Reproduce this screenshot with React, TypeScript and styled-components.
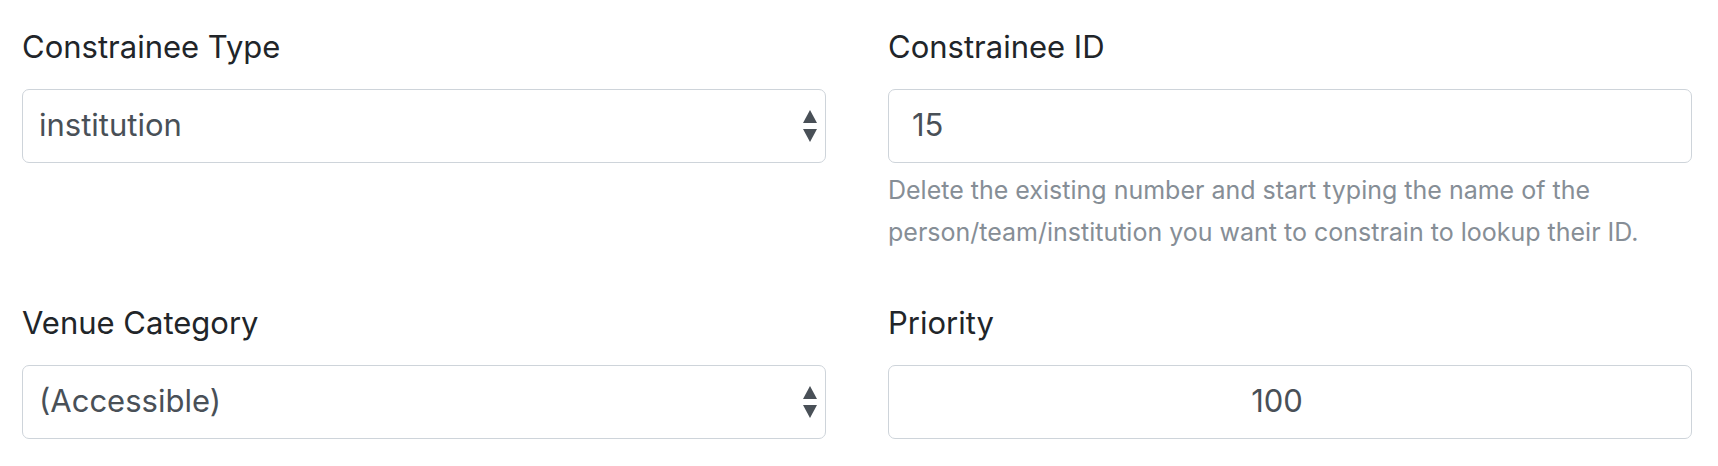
import React from "react";
import styled, { createGlobalStyle } from "styled-components";

const GlobalStyle = createGlobalStyle`
  html, body {
    margin: 0;
    padding: 0;
    background: #ffffff;
  }
  body {
    font-family: Inter, "Noto Sans", "Liberation Sans", sans-serif;
    color: #212529;
  }
  * { box-sizing: border-box; }
`;

const Form = styled.form`
  display: grid;
  grid-template-columns: 1fr 1fr;
  column-gap: 62px;
  row-gap: 47px;
  padding: 24px 26px 0 22px;
`;

const Group = styled.div`
  display: flex;
  flex-direction: column;
  min-width: 0;
`;

const Label = styled.label`
  font-size: 31px;
  line-height: 46px;
  color: #212529;
  margin-bottom: 19px;
`;

const SelectWrap = styled.div`
  position: relative;
  display: flex;
`;

const Select = styled.select`
  appearance: none;
  -webkit-appearance: none;
  width: 100%;
  height: 74px;
  padding: 0 40px 4px 16px;
  font-family: inherit;
  font-size: 31px;
  color: #495057;
  background: #ffffff;
  border: 1px solid #ced4da;
  border-radius: 7px;
  outline: none;
`;

const Arrows = styled.svg`
  position: absolute;
  right: 9px;
  top: 50%;
  transform: translateY(-50%);
  pointer-events: none;
`;

const Input = styled.input<{ $align?: "left" | "center"; $padL: number; $padR: number }>`
  width: 100%;
  height: 74px;
  padding: 0 ${(p) => p.$padR}px 4px ${(p) => p.$padL}px;
  font-family: inherit;
  font-size: 31px;
  color: #495057;
  text-align: ${(p) => p.$align ?? "left"};
  background: #ffffff;
  border: 1px solid #ced4da;
  border-radius: 7px;
  outline: none;
`;

const Help = styled.small`
  display: block;
  margin-top: 6px;
  font-size: 25px;
  line-height: 42px;
  color: #868e96;
`;

const SelectArrows = () => (
  <Arrows width="14" height="32" viewBox="0 0 14 32">
    <path d="M7 0 L14 13 L0 13 Z" fill="#495057" />
    <path d="M0 19 L14 19 L7 32 Z" fill="#495057" />
  </Arrows>
);

export default function App() {
  return (
    <>
      <GlobalStyle />
      <Form onSubmit={(e) => e.preventDefault()}>
        <Group>
          <Label htmlFor="ctype">Constrainee Type</Label>
          <SelectWrap>
            <Select id="ctype" defaultValue="institution">
              <option value="person">person</option>
              <option value="team">team</option>
              <option value="institution">institution</option>
            </Select>
            <SelectArrows />
          </SelectWrap>
        </Group>
        <Group>
          <Label htmlFor="cid">Constrainee ID</Label>
          <Input id="cid" type="text" defaultValue="15" $padL={23} $padR={17} />
          <Help>
            Delete the existing number and start typing the name of the
            <br />
            person/team/institution you want to constrain to lookup their ID.
          </Help>
        </Group>
        <Group>
          <Label htmlFor="vcat">Venue Category</Label>
          <SelectWrap>
            <Select id="vcat" defaultValue="accessible">
              <option value="accessible">(Accessible)</option>
            </Select>
            <SelectArrows />
          </SelectWrap>
        </Group>
        <Group>
          <Label htmlFor="prio">Priority</Label>
          <Input id="prio" type="text" defaultValue="100" $align="center" $padL={18} $padR={44} />
        </Group>
      </Form>
    </>
  );
}
